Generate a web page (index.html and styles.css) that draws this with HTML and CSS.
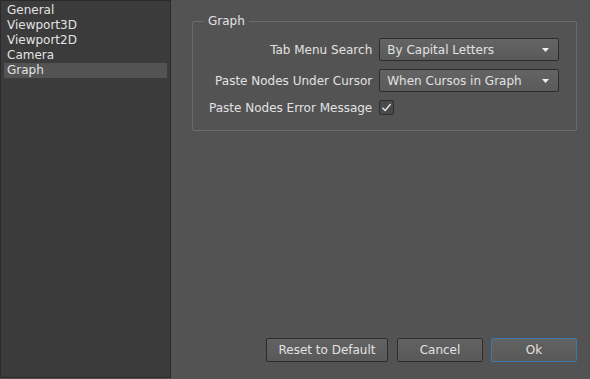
FILE: index.html
```html
<!DOCTYPE html>
<html>
<head>
    <title>Preferences</title>
    <meta charset="UTF-8">
    <link rel="stylesheet" href="styles.css">
</head>
<body>
    <div class="window">
        <ul class="sidebar">
            <li>General</li>
            <li>Viewport3D</li>
            <li>Viewport2D</li>
            <li>Camera</li>
            <li class="selected">Graph</li>
        </ul>

        <div class="main">
            <fieldset class="group">
                <legend>Graph</legend>
                <div class="form">
                    <label>Tab Menu Search</label>
                    <div class="combo">
                        <span>By Capital Letters</span>
                        <svg class="arrow" width="7" height="4" viewBox="0 0 7 4"><path d="M0 0H7L3.5 4Z" fill="#f0f0f0"/></svg>
                    </div>

                    <label>Paste Nodes Under Cursor</label>
                    <div class="combo">
                        <span>When Cursos in Graph</span>
                        <svg class="arrow" width="7" height="4" viewBox="0 0 7 4"><path d="M0 0H7L3.5 4Z" fill="#f0f0f0"/></svg>
                    </div>

                    <label>Paste Nodes Error Message</label>
                    <div class="check-cell">
                        <div class="checkbox">
                            <svg width="13" height="13" viewBox="0 0 13 13"><path d="M2.5 6.8L5.2 9.5L10.6 3" fill="none" stroke="#e8e8e8" stroke-width="1.4"/></svg>
                        </div>
                    </div>
                </div>
            </fieldset>

            <div class="buttons">
                <button class="btn btn-wide">Reset to Default</button>
                <button class="btn">Cancel</button>
                <button class="btn btn-default">Ok</button>
            </div>
        </div>
    </div>
</body>
</html>
```

FILE: styles.css
```css
body {
    margin: 0;
    font-family: "DejaVu Sans", sans-serif;
    font-size: 12px;
    color: #e2e2e2;
    background: #535353;
}
.window {
    display: flex;
    width: 590px;
    height: 379px;
}
.sidebar {
    box-sizing: border-box;
    width: 171px;
    height: 378px;
    margin: 0;
    padding: 2px 3px;
    list-style: none;
    background: #3b3b3b;
    border: 1px solid #2a2a2a;
}
.sidebar li {
    height: 15px;
    line-height: 15px;
    padding-left: 3px;
}
.sidebar li.selected {
    background: #535353;
}
.main {
    flex: 1;
    display: flex;
    flex-direction: column;
    padding: 14px 13px 17px 21px;
}
.group {
    margin: 0;
    padding: 0 0 15px 0;
    border: 1px solid #6b6b6b;
    border-radius: 2px;
}
.group legend {
    margin-left: 11px;
    padding: 0 4px;
    line-height: 14px;
}
.form {
    display: grid;
    grid-template-columns: auto 180px;
    column-gap: 7px;
    row-gap: 8px;
    align-items: center;
    justify-content: start;
    padding: 10px 0 0 16px;
}
.form label {
    text-align: right;
    white-space: nowrap;
}
.combo {
    box-sizing: border-box;
    height: 23px;
    display: flex;
    align-items: center;
    justify-content: space-between;
    padding: 0 9px 0 7px;
    background: linear-gradient(#646464, #5a5a5a);
    border: 1px solid #2c2c2c;
    border-radius: 2px;
}
.arrow {
    display: block;
}
.check-cell {
    height: 15px;
    display: flex;
    align-items: center;
}
.checkbox {
    box-sizing: border-box;
    width: 15px;
    height: 15px;
    background: #4a4a4a;
    border: 1px solid #2e2e2e;
    border-radius: 2px;
}
.checkbox svg {
    display: block;
}
.buttons {
    margin-top: auto;
    display: flex;
    justify-content: flex-end;
    gap: 8px;
}
.btn {
    box-sizing: border-box;
    width: 86px;
    height: 24px;
    padding: 0;
    font-family: "DejaVu Sans", sans-serif;
    font-size: 12px;
    color: #e2e2e2;
    background: linear-gradient(#626262, #595959);
    border: 1px solid #2c2c2c;
    border-radius: 2px;
}
.btn-wide {
    width: 122px;
    margin-right: 1px;
}
.btn-default {
    border-color: #3c78ad;
}
```
